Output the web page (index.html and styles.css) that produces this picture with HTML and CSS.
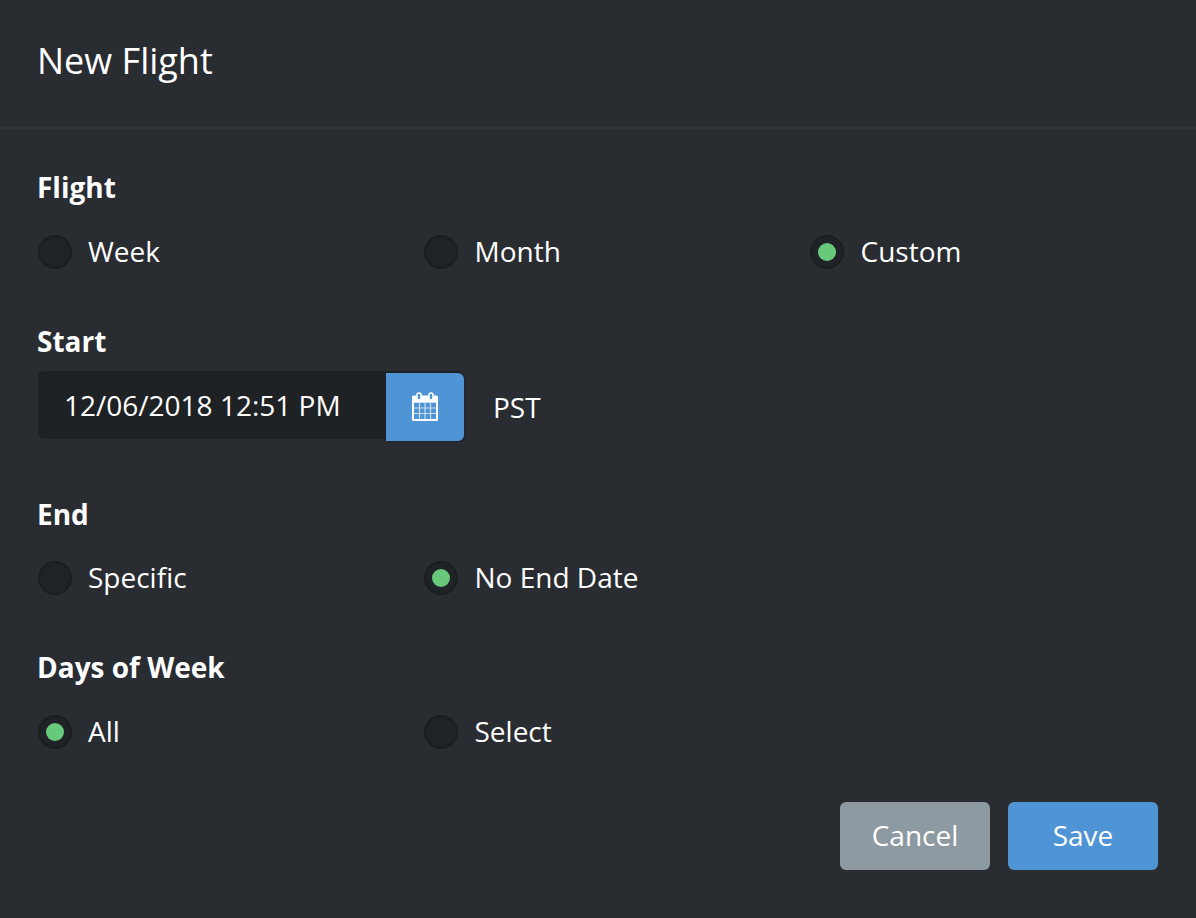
FILE: index.html
```html
<!DOCTYPE html>
<html lang="en">
<head>
    <meta charset="UTF-8">
    <title>New Flight</title>
    <link rel="stylesheet" href="styles.css">
</head>
<body>
    <header class="modal-header">
        <h1>New Flight</h1>
    </header>

    <div class="modal-body">
        <div class="group group-flight">
            <div class="group-label">Flight</div>
            <div class="radio-row">
                <div class="radio"><span class="dot"></span>Week</div>
                <div class="radio"><span class="dot"></span>Month</div>
                <div class="radio on"><span class="dot"></span>Custom</div>
            </div>
        </div>

        <div class="group group-start">
            <div class="group-label">Start</div>
            <div class="date-row">
                <div class="date-field">
                    <div class="date-value">12/06/2018 12:51 PM</div>
                    <div class="date-btn">
                        <svg width="28" height="30" viewBox="0 0 28 30" fill="none">
                            <path d="M2.5 3.5h23a1.5 1.5 0 0 1 1.5 1.5v22.5a1.5 1.5 0 0 1-1.5 1.5h-23A1.5 1.5 0 0 1 1 27.500V5a1.500 1.500 0 0 1 1.500-1.500z" fill="#fff"/>
                            <path d="M3 10h22v17H3z" fill="#4f94d4"/>
                            <path d="M3 10.500h22M3 16h22M3 21.500h22M8.500 10v17M14 10v17M19.500 10v17" stroke="#fff" stroke-width="1.200" opacity=".7"/>
                            <rect x="6" y="1" width="4" height="7" rx="2" fill="#4f94d4" stroke="#fff" stroke-width="1.500"/>
                            <rect x="18" y="1" width="4" height="7" rx="2" fill="#4f94d4" stroke="#fff" stroke-width="1.500"/>
                        </svg>
                    </div>
                </div>
                <span class="tz">PST</span>
            </div>
        </div>

        <div class="group group-end">
            <div class="group-label">End</div>
            <div class="radio-row">
                <div class="radio"><span class="dot"></span>Specific</div>
                <div class="radio on"><span class="dot"></span>No End Date</div>
            </div>
        </div>

        <div class="group group-days">
            <div class="group-label">Days of Week</div>
            <div class="radio-row">
                <div class="radio on"><span class="dot"></span>All</div>
                <div class="radio"><span class="dot"></span>Select</div>
            </div>
        </div>

        <div class="actions">
            <button class="btn btn-cancel">Cancel</button>
            <button class="btn btn-save">Save</button>
        </div>
    </div>
</body>
</html>
```

FILE: styles.css
```css
body {
    margin: 0;
    width: 1196px;
    height: 918px;
    overflow: hidden;
    background-color: #292c31;
    color: #fff;
    font-family: "Open Sans", sans-serif;
}
.modal-header {
    height: 127px;
    padding: 0 38px;
    display: flex;
    align-items: center;
    border-bottom: 2px solid #2f3339;
}
.modal-header h1 {
    margin: 0 0 5px -1px;
    font-size: 36px;
    font-weight: 400;
    line-height: 46px;
}
.modal-body {
    padding: 0 38px;
}
.group-label {
    margin-left: -1px;
    font-size: 28px;
    font-weight: 700;
    line-height: 36px;
}
.group-flight {
    padding-top: 40px;
}
.group-start {
    padding-top: 54px;
}
.group-end {
    padding-top: 53px;
}
.group-days {
    padding-top: 54px;
}
.radio-row {
    display: grid;
    grid-template-columns: 386px 386px 1fr;
    margin-top: 28px;
}
.group-end .radio-row {
    margin-top: 27px;
}
.radio {
    display: flex;
    align-items: center;
    gap: 16px;
    height: 36px;
    font-size: 28px;
    line-height: 36px;
}
.radio + .radio {
    gap: 16.5px;
}
.dot {
    width: 34px;
    height: 34px;
    margin-top: 2px;
    box-sizing: border-box;
    border: 2px solid #1b1e21;
    border-radius: 50%;
    background-color: #1f2327;
    display: flex;
    align-items: center;
    justify-content: center;
}
.on .dot::after {
    content: "";
    width: 18px;
    height: 18px;
    border-radius: 50%;
    background-color: #68c97a;
}
.date-row {
    display: flex;
    margin-top: 12px;
}
.date-field {
    display: flex;
    width: 426px;
    height: 68px;
    background-color: #1f2225;
    border-radius: 6px;
}
.date-value {
    flex: 1;
    padding-left: 26px;
    font-size: 28px;
    line-height: 68px;
}
.date-btn {
    width: 78px;
    height: 68px;
    margin-top: 2px;
    background-color: #4f94d4;
    border-radius: 0 6px 6px 0;
    box-shadow: 1px 1px 2px rgba(0, 0, 0, 0.2);
    display: flex;
    align-items: center;
    justify-content: center;
}
.tz {
    margin-left: 29px;
    font-size: 28px;
    line-height: 72px;
}
.actions {
    display: flex;
    justify-content: flex-end;
    gap: 18px;
    margin-top: 53px;
}
.btn {
    width: 150px;
    height: 68px;
    padding: 0 0 2px;
    border: none;
    border-radius: 6px;
    color: #fff;
    font-family: inherit;
    font-size: 28px;
}
.btn-cancel {
    background-color: #8d9aa2;
}
.btn-save {
    background-color: #4f94d4;
}
```
